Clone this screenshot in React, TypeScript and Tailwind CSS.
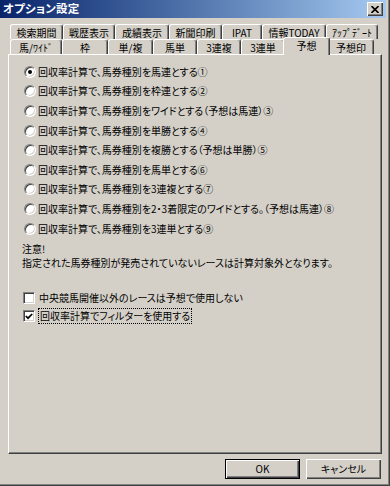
import React from 'react';

const row1 = [
  { label: '検索期間', w: 'w-[53px]' },
  { label: '戦歴表示', w: 'w-[52px]' },
  { label: '成績表示', w: 'w-[54px]' },
  { label: '新聞印刷', w: 'w-[53px]' },
  { label: 'IPAT', w: 'w-[40px]' },
  { label: '情報TODAY', w: 'w-[64px]' },
  { label: 'ｱｯﾌﾟﾃﾞｰﾄ', w: 'w-[52px]' },
];

const row2 = [
  { label: '馬/ﾜｲﾄﾞ', w: 'w-[52px]' },
  { label: '枠', w: 'w-[46px]' },
  { label: '単/複', w: 'w-[45px]' },
  { label: '馬単', w: 'w-[44px]' },
  { label: '3連複', w: 'w-[44px]' },
  { label: '3連単', w: 'w-[44px]' },
  { label: '予想', w: 'w-[47px]', active: true },
  { label: '予想印', w: 'w-[46px]' },
];

const options = [
  '回収率計算で、馬券種別を馬連とする①',
  '回収率計算で、馬券種別を枠連とする②',
  '回収率計算で、馬券種別をワイドとする（予想は馬連）③',
  '回収率計算で、馬券種別を単勝とする④',
  '回収率計算で、馬券種別を複勝とする（予想は単勝）⑤',
  '回収率計算で、馬券種別を馬単とする⑥',
  '回収率計算で、馬券種別を3連複とする⑦',
  '回収率計算で、馬券種別を2・3着限定のワイドとする。（予想は馬連）⑧',
  '回収率計算で、馬券種別を3連単とする⑨',
];

const Tab: React.FC<{ label: string; w: string; active?: boolean }> = ({ label, w, active }) => {
  if (active) {
    return (
      <div
        className={`${w} h-[18px] -mt-[2px] -mb-px -mx-[2px] relative z-10 bg-[#d4d0c8] flex items-end justify-center pb-[4px] border-t border-l border-r border-white border-r-[#404040] rounded-t-[3px] shadow-[inset_-1px_0_#808080]`}
      >
        {label}
      </div>
    );
  }
  return (
    <div
      className={`${w} h-[15px] flex items-center justify-center pt-px border-t border-l border-r border-white border-r-[#404040] rounded-t-[3px] shadow-[inset_-1px_0_#808080]`}
    >
      {label}
    </div>
  );
};

const Radio: React.FC<{ checked?: boolean }> = ({ checked }) => (
  <div className="w-[12px] h-[12px] shrink-0 rounded-full bg-white border border-t-[#808080] border-l-[#808080] border-b-white border-r-white shadow-[inset_1px_1px_#404040,inset_-1px_-1px_#d4d0c8] flex items-center justify-center">
    {checked && <div className="w-[4px] h-[4px] rounded-full bg-black" />}
  </div>
);

const Check: React.FC<{ checked?: boolean }> = ({ checked }) => (
  <div className="w-[12px] h-[12px] shrink-0 bg-white border border-t-[#808080] border-l-[#808080] border-b-white border-r-white shadow-[inset_1px_1px_#404040,inset_-1px_-1px_#d4d0c8] flex items-center justify-center">
    {checked && (
      <svg width="8" height="7" viewBox="0 0 8 7">
        <path d="M0.8 3 L3 5.2 L7.2 1" stroke="black" strokeWidth="1.7" fill="none" />
      </svg>
    )}
  </div>
);

export default function App() {
  return (
    <div className="w-[390px] h-[486px] bg-[#d4d0c8] flex flex-col text-black text-[10px] leading-none overflow-hidden font-['Noto_Sans_CJK_JP','Noto_Sans',sans-serif] [font-feature-settings:'palt'] shadow-[inset_-1px_-1px_#404040,inset_-2px_-2px_#808080]">
      {/* title bar */}
      <div className="h-[18px] w-[386px] shrink-0 bg-linear-to-r from-[#0a246a] to-[#a6caf0] flex items-center justify-between pl-[3px] pr-[3px]">
        <span className="text-white font-bold text-[11.5px] tracking-[0.2px]">オプション設定</span>
        <div className="w-[16px] h-[14px] bg-[#d4d0c8] flex items-center justify-center shadow-[inset_1px_1px_#ffffff,inset_-1px_-1px_#404040,inset_-2px_-2px_#808080]">
          <svg width="8" height="7" viewBox="0 0 8 7">
            <path d="M0.5 0 L7.5 7 M7.5 0 L0.5 7" stroke="black" strokeWidth="1.6" />
          </svg>
        </div>
      </div>

      {/* tabs */}
      <div className="mt-[6px] ml-[10px] flex flex-col">
        <div className="flex items-end">
          {row1.map(t => (
            <Tab key={t.label} label={t.label} w={t.w} />
          ))}
        </div>
        <div className="flex items-end">
          {row2.map(t => (
            <Tab key={t.label} label={t.label} w={t.w} active={t.active} />
          ))}
        </div>
      </div>

      {/* panel */}
      <div className="mx-[8px] h-[400px] shrink-0 border border-white border-r-[#404040] border-b-[#404040] shadow-[inset_-1px_-1px_#808080] pt-[7px] pl-[13px] flex flex-col">
        <div className="flex flex-col pl-[2px]">
          {options.map((o, i) => (
            <div key={i} className="h-[19.6px] flex items-center gap-[2px]">
              <Radio checked={i === 0} />
              <span className="whitespace-nowrap">{o}</span>
            </div>
          ))}
        </div>

        <div className="mt-[4px] leading-[14px]">
          <div>注意!</div>
          <div>指定された馬券種別が発売されていないレースは計算対象外となります。</div>
        </div>

        <div className="mt-[19px] flex flex-col pl-[1px]">
          <div className="h-[18px] flex items-center gap-[3px]">
            <Check />
            <span className="px-px py-[2px]">中央競馬開催以外のレースは予想で使用しない</span>
          </div>
          <div className="h-[18px] flex items-center gap-[3px]">
            <Check checked />
            <span className="px-px py-[2px] border border-dotted border-black">回収率計算でフィルターを使用する</span>
          </div>
        </div>
      </div>

      {/* buttons */}
      <div className="mt-[5px] flex justify-end gap-[6px] pr-[9px]">
        <button className="w-[75px] h-[20px] bg-[#d4d0c8] border border-black shadow-[inset_1px_1px_#ffffff,inset_-1px_-1px_#404040,inset_-2px_-2px_#808080] flex items-center justify-center">
          OK
        </button>
        <button className="w-[75px] h-[20px] bg-[#d4d0c8] shadow-[inset_1px_1px_#ffffff,inset_-1px_-1px_#404040,inset_-2px_-2px_#808080] flex items-center justify-center">
          キャンセル
        </button>
      </div>
    </div>
  );
}
